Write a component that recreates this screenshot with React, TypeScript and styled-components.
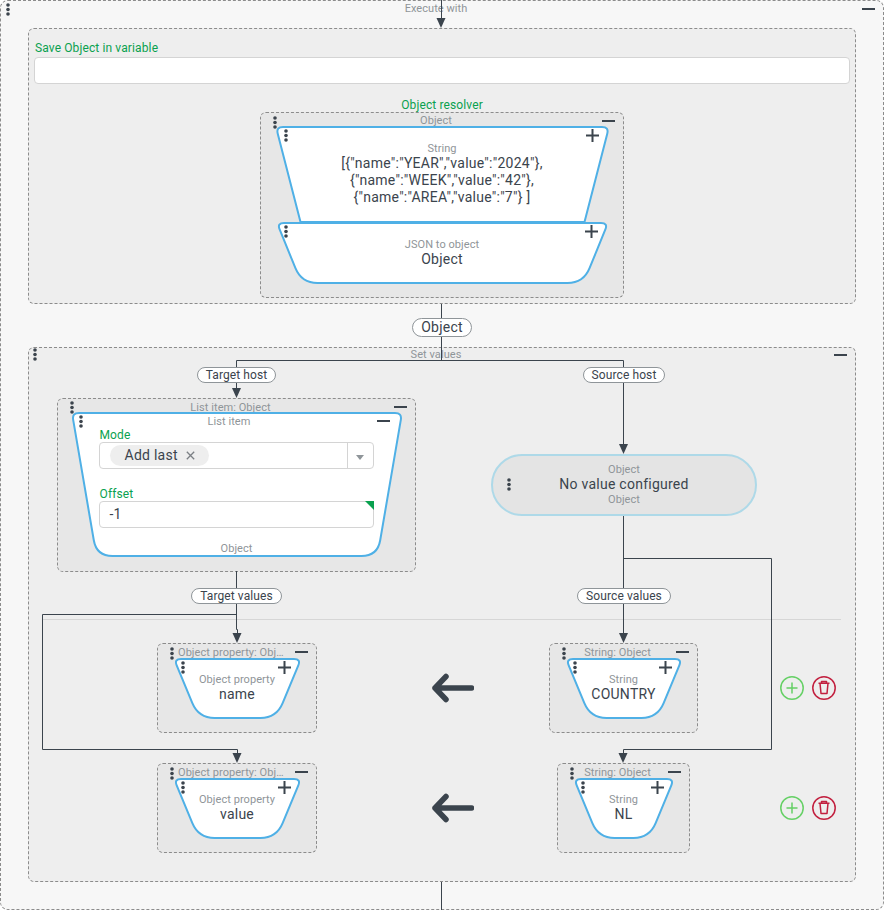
import React from "react";
import styled, { createGlobalStyle } from "styled-components";

const INK = "#3b444d";
const GRAY = "#8f9599";
const GREEN = "#0aa14f";
const BLUE = "#4fb0e6";

const Global = createGlobalStyle`
  html, body { margin: 0; padding: 0; background: #fff; overflow: hidden; }
  * { box-sizing: border-box; }
  body { font-family: Roboto, "Liberation Sans", sans-serif; color: ${INK}; }
`;

const Stage = styled.div`
  position: relative;
  width: 884px;
  height: 910px;
  overflow: hidden;
`;

const EdgeLayer = styled.svg`
  position: absolute;
  left: 0;
  top: 0;
  z-index: 1;
  pointer-events: none;
`;

const Outer = styled.div`
  position: relative;
  width: 884px;
  height: 910px;
  background: #f7f7f7;
  border: 1px dashed #8c8c8c;
  border-radius: 8px;
  display: flex;
  flex-direction: column;
  align-items: center;
`;

const Panel = styled.section<{ $h: number }>`
  position: relative;
  width: 828px;
  height: ${(p) => p.$h}px;
  background: #eeeeee;
  border: 1px dashed #8c8c8c;
  border-radius: 6px;
  flex: none;
`;

const Head = styled.div<{ $top?: number }>`
  display: flex;
  align-items: center;
  height: 14px;
  margin-top: ${(p) => p.$top ?? 0}px;
  padding: 0 8px 0 9px;
  flex: none;
  align-self: stretch;
`;

const HeadLabel = styled.div<{ $nudge?: number }>`
  position: relative;
  top: ${(p) => p.$nudge ?? 2}px;
  flex: 1;
  min-width: 0;
  padding: 0 11px;
  font-size: 11px;
  line-height: 14px;
  letter-spacing: 0.06px;
  color: ${GRAY};
  text-align: center;
  white-space: nowrap;
  overflow: hidden;
  text-overflow: ellipsis;
`;

const DotsHolder = styled.span<{ $x: number; $y: number }>`
  position: absolute;
  left: ${(p) => p.$x}px;
  top: ${(p) => p.$y}px;
  width: 4px;
  height: 13px;
  z-index: 2;
  display: block;
  line-height: 0;
`;

const MinusBar = styled.span<{ $inset?: number }>`
  display: block;
  width: 13px;
  height: 2px;
  margin-right: ${(p) => p.$inset ?? 0}px;
  background: ${INK};
  flex: none;
  position: relative;
  top: 1px;
`;

const PlusHolder = styled.span`
  position: absolute;
  right: 9px;
  top: 3px;
  width: 13px;
  height: 13px;
  line-height: 0;
  z-index: 2;
`;

function Dots({ x, y }: { x: number; y: number }) {
  return (
    <DotsHolder $x={x} $y={y}>
      <svg width="4" height="13" viewBox="0 0 4 13">
        <circle cx="2" cy="2" r="1.8" fill={INK} />
        <circle cx="2" cy="6.5" r="1.8" fill={INK} />
        <circle cx="2" cy="11" r="1.8" fill={INK} />
      </svg>
    </DotsHolder>
  );
}

function Plus() {
  return (
    <PlusHolder>
      <svg width="13" height="13" viewBox="0 0 13 13">
        <path d="M0 6.5H13M6.5 0V13" stroke={INK} strokeWidth="2" fill="none" />
      </svg>
    </PlusHolder>
  );
}

const Box = styled.div<{ $w: number; $h: number }>`
  position: relative;
  width: ${(p) => p.$w}px;
  height: ${(p) => p.$h}px;
  background: #e7e7e7;
  border: 1px dashed #8c8c8c;
  border-radius: 6px;
  display: flex;
  flex-direction: column;
  align-items: center;
  flex: none;
`;

const BoxBody = styled.div<{ $top: number }>`
  margin-top: ${(p) => p.$top}px;
  display: flex;
  flex-direction: column;
  align-items: center;
`;

const TrapShell = styled.div<{ $w: number; $h: number; $over?: boolean }>`
  position: relative;
  width: ${(p) => p.$w}px;
  height: ${(p) => p.$h}px;
  margin-top: ${(p) => (p.$over ? -1 : 0)}px;
  flex: none;
  display: flex;
  flex-direction: column;
  align-items: center;
`;

const TrapShape = styled.svg`
  position: absolute;
  left: 0;
  top: 0;
  overflow: visible;
`;

const TrapContent = styled.div`
  position: relative;
  width: 100%;
  height: 100%;
  display: flex;
  flex-direction: column;
  align-items: center;
`;

const SmallLabel = styled.div<{ $top?: number }>`
  font-size: 11px;
  line-height: 14px;
  letter-spacing: 0.06px;
  color: ${GRAY};
  text-align: center;
  margin-top: ${(p) => p.$top ?? 0}px;
  white-space: nowrap;
`;

const ValueText = styled.div`
  font-size: 14px;
  line-height: 17px;
  letter-spacing: 0.25px;
  margin-top: -1px;
  color: ${INK};
  text-align: center;
  white-space: pre-line;
`;

function roundedPoly(pts: [number, number][], radii: number[]) {
  const n = pts.length;
  let d = "";
  for (let i = 0; i < n; i++) {
    const p = pts[i];
    const a = pts[(i - 1 + n) % n];
    const b = pts[(i + 1) % n];
    const r = radii[i];
    const la = Math.hypot(a[0] - p[0], a[1] - p[1]);
    const lb = Math.hypot(b[0] - p[0], b[1] - p[1]);
    const s = [p[0] + ((a[0] - p[0]) * r) / la, p[1] + ((a[1] - p[1]) * r) / la];
    const e = [p[0] + ((b[0] - p[0]) * r) / lb, p[1] + ((b[1] - p[1]) * r) / lb];
    d += `${i === 0 ? "M" : "L"}${s[0]} ${s[1]} Q${p[0]} ${p[1]} ${e[0]} ${e[1]} `;
  }
  return d + "Z";
}

function Trap({
  w,
  h,
  flat,
  over,
  children,
}: {
  w: number;
  h: number;
  flat?: boolean;
  over?: boolean;
  children: React.ReactNode;
}) {
  const rb = flat ? 0.01 : 16;
  const d = roundedPoly(
    [
      [-1, 1],
      [w + 1, 1],
      [w - 23.5, h - 1],
      [23.5, h - 1],
    ],
    [7, 7, rb, rb]
  );
  return (
    <TrapShell $w={w} $h={h} $over={over}>
      <TrapShape width={w} height={h} viewBox={`0 0 ${w} ${h}`}>
        <path d={d} fill="#fff" stroke={BLUE} strokeWidth="2" />
      </TrapShape>
      <TrapContent>{children}</TrapContent>
    </TrapShell>
  );
}

/* --- Save panel ------------------------------------------------- */

const FieldLabel = styled.label`
  display: block;
  padding-left: 1px;
  font-size: 12px;
  line-height: 14px;
  letter-spacing: 0.12px;
  color: ${GREEN};
`;

const TextField = styled.div`
  position: relative;
  height: 27px;
  background: #fff;
  border: 1px solid #d4d4d4;
  border-radius: 4px;
  font-size: 14px;
  line-height: 25px;
  letter-spacing: 0.25px;
  padding-left: 10px;
  color: ${INK};
`;

const SaveField = styled(TextField)`
  margin-top: 2px;
`;

const Corner = styled.span`
  position: absolute;
  top: -1px;
  right: -1px;
  width: 0;
  height: 0;
  border-top: 9px solid ${GREEN};
  border-left: 9px solid transparent;
`;

const SaveArea = styled.div`
  padding: 12px 5px 0 5px;
`;

const ResolverTitle = styled(FieldLabel)`
  margin-top: 14px;
  padding-left: 0;
  text-align: center;
`;

const ResolverWrap = styled.div`
  display: flex;
  justify-content: center;
`;

/* --- Pills ------------------------------------------------------ */

const EdgePill = styled.div<{ $big?: boolean }>`
  position: relative;
  z-index: 2;
  height: ${(p) => (p.$big ? 19 : 16)}px;
  padding: 0 8px;
  background: #fff;
  border: 1px solid ${GRAY};
  border-radius: 10px;
  font-size: ${(p) => (p.$big ? 14 : 12)}px;
  line-height: ${(p) => (p.$big ? 16 : 15)}px;
  letter-spacing: ${(p) => (p.$big ? 0.25 : 0.1)}px;
  color: ${INK};
  white-space: nowrap;
  flex: none;
`;

const ObjectPillRow = styled.div`
  margin: 14px 0 10px;
  display: flex;
  justify-content: center;
  width: 100%;
`;

/* --- Set values ------------------------------------------------- */

const HostGrid = styled.div`
  display: grid;
  grid-template-columns: 415px 360px;
  grid-template-rows: 16px 174px 16px;
  row-gap: 15px;
  justify-items: center;
  align-items: start;
  margin-top: 6px;
`;

const LastRowPill = styled(EdgePill)`
  margin-top: 1px;
`;

const NoValue = styled.div`
  position: relative;
  width: 266px;
  height: 62px;
  margin-top: 56px;
  background: #e4e4e4;
  border: 2px solid #aed9e8;
  border-radius: 31px;
  display: flex;
  flex-direction: column;
  align-items: center;
  justify-content: center;
`;

const ModeForm = styled.div`
  align-self: stretch;
  margin-top: 1px;
  padding: 0 27px 0 26px;
`;

const OffsetLabel = styled(FieldLabel)`
  margin-top: 18px;
`;

const SelectBox = styled.div`
  display: flex;
  align-items: center;
  height: 27px;
  background: #fff;
  border: 1px solid #d4d4d4;
  border-radius: 4px;
`;

const SelectValue = styled.div`
  flex: 1;
  padding-left: 10px;
  display: flex;
  align-items: center;
`;

const Chip = styled.div`
  display: flex;
  align-items: center;
  height: 21px;
  width: 99px;
  margin-top: -1px;
  padding-left: 15px;
  border-radius: 11px;
  background: #eeeeee;
  font-size: 14px;
  letter-spacing: 0.25px;
  color: ${INK};
  gap: 8px;
`;

const Caret = styled.div`
  width: 26px;
  height: 25px;
  border-left: 1px solid #d4d4d4;
  display: flex;
  align-items: center;
  justify-content: center;
  &::after {
    content: "";
    margin-top: 3px;
    border-top: 5px solid #8f9599;
    border-left: 4.5px solid transparent;
    border-right: 4.5px solid transparent;
  }
`;

const TrapFoot = styled(SmallLabel)`
  margin-top: 14px;
`;

const Divider = styled.div`
  width: 798px;
  height: 1px;
  margin: 16px 0 23px 14px;
  background: #d6d6d6;
`;

const MapRow = styled.div`
  display: flex;
  align-items: center;
  height: 90px;
  margin-bottom: 30px;
`;

const LeftSlot = styled.div`
  margin-left: 128px;
  flex: none;
`;

const BigArrow = styled.svg`
  margin-left: 115px;
  flex: none;
`;

const RightSlot = styled.div`
  width: 299px;
  display: flex;
  justify-content: center;
  flex: none;
`;

const Actions = styled.div`
  display: flex;
  gap: 8px;
  margin-left: 6.5px;
`;

const RoundBtn = styled.button`
  width: 24px;
  height: 24px;
  padding: 0;
  background: transparent;
  border: 0;
  line-height: 0;
`;

function ArrowLeft() {
  return (
    <BigArrow width="42" height="30" viewBox="0 0 42 30">
      <path
        d="M14 3.5L3 15L14 26.5M3 15H39.5"
        fill="none"
        stroke={INK}
        strokeWidth="5.5"
        strokeLinecap="round"
        strokeLinejoin="round"
      />
    </BigArrow>
  );
}

function AddBtn() {
  return (
    <RoundBtn aria-label="add">
      <svg width="24" height="24" viewBox="0 0 24 24">
        <circle cx="12" cy="12" r="11.2" fill="none" stroke="#66d066" strokeWidth="1.5" />
        <path d="M6.5 12H17.5M12 6.5V17.5" stroke="#66d066" strokeWidth="1.5" />
      </svg>
    </RoundBtn>
  );
}

function TrashBtn() {
  return (
    <RoundBtn aria-label="delete">
      <svg width="24" height="24" viewBox="0 0 24 24" fill="none" stroke="#c2203f" strokeWidth="1.5">
        <circle cx="12" cy="12" r="11.2" />
        <path d="M6.5 7.2H17.5M9.5 7V5.6H14.5V7M8 7.2L9 17.5H15L16 7.2" strokeLinejoin="round" />
      </svg>
    </RoundBtn>
  );
}

function ChipClose() {
  return (
    <svg width="9" height="9" viewBox="0 0 9 9">
      <path d="M0.8 0.8L8.2 8.2M8.2 0.8L0.8 8.2" stroke="#7b7f84" strokeWidth="1.3" />
    </svg>
  );
}

function SmallNode({
  boxW,
  trapW,
  title,
  type,
  value,
}: {
  boxW: number;
  trapW: number;
  title: string;
  type: string;
  value: string;
}) {
  return (
    <Box $w={boxW} $h={90}>
      <Dots x={12} y={3} />
      <Head>
        <HeadLabel>{title}</HeadLabel>
        <MinusBar />
      </Head>
      <Trap w={trapW} h={61}>
        <Dots x={6} y={3} />
        <Plus />
        <SmallLabel $top={15}>{type}</SmallLabel>
        <ValueText>{value}</ValueText>
      </Trap>
    </Box>
  );
}

function Arrowhead({ x, y }: { x: number; y: number }) {
  return <path d={`M${x - 4.5} ${y - 10}H${x + 4.5}L${x} ${y}Z`} fill={INK} />;
}

function Edges() {
  const lines = [
    "M441.5 0V20",
    "M441.5 304V360.5",
    "M236.5 360.5H623.5",
    "M236.5 360.5V390",
    "M623.5 360.5V446",
    "M623.5 516V635",
    "M623.5 558.5H771.5V749.5H623.5V755",
    "M236.5 571V629.5H237.5V635",
    "M236.5 614.5H42.5V749.5H237.5V755",
    "M441.5 882V910",
  ];
  return (
    <EdgeLayer width="884" height="910" viewBox="0 0 884 910">
      {lines.map((d) => (
        <path key={d} d={d} fill="none" stroke={INK} strokeWidth="1" />
      ))}
      <Arrowhead x={441} y={28} />
      <Arrowhead x={236.5} y={398} />
      <Arrowhead x={623.5} y={454} />
      <Arrowhead x={237} y={643} />
      <Arrowhead x={623.5} y={643} />
      <Arrowhead x={237} y={763} />
      <Arrowhead x={623} y={763} />
    </EdgeLayer>
  );
}

const JSON_LINES = `[{"name":"YEAR","value":"2024"},
{"name":"WEEK","value":"42"},
{"name":"AREA","value":"7"} ]`;

export default function App() {
  return (
    <Stage>
      <Global />
      <Outer>
        <Dots x={5} y={2} />
        <Head>
          <HeadLabel $nudge={1}>Execute with</HeadLabel>
          <MinusBar />
        </Head>
        <BoxBody $top={13}>
          <Panel $h={276}>
            <SaveArea>
              <FieldLabel>Save Object in variable</FieldLabel>
              <SaveField />
              <ResolverTitle>Object resolver</ResolverTitle>
            </SaveArea>
            <ResolverWrap>
              <Box $w={364} $h={186}>
                <Dots x={12} y={3} />
                <Head>
                  <HeadLabel $nudge={1}>Object</HeadLabel>
                  <MinusBar />
                </Head>
                <BoxBody $top={-1}>
                  <Trap w={331} h={97} flat>
                    <Dots x={7} y={3} />
                    <Plus />
                    <SmallLabel $top={16}>String</SmallLabel>
                    <ValueText>{JSON_LINES}</ValueText>
                  </Trap>
                  <Trap w={329} h={62} over>
                    <Dots x={6} y={3} />
                    <Plus />
                    <SmallLabel $top={16}>JSON to object</SmallLabel>
                    <ValueText>Object</ValueText>
                  </Trap>
                </BoxBody>
              </Box>
            </ResolverWrap>
          </Panel>
        </BoxBody>
        <ObjectPillRow>
          <EdgePill $big>Object</EdgePill>
        </ObjectPillRow>
        <Panel $h={535}>
          <Dots x={4} y={0} />
          <Head $top={-1}>
            <HeadLabel $nudge={1}>Set values</HeadLabel>
            <MinusBar />
          </Head>
          <HostGrid>
            <EdgePill>Target host</EdgePill>
            <EdgePill>Source host</EdgePill>
            <Box $w={359} $h={174}>
              <Dots x={12} y={2} />
              <Head>
                <HeadLabel>List item: Object</HeadLabel>
                <MinusBar />
              </Head>
              <BoxBody $top={-1}>
                <Trap w={328} h={145}>
                  <Dots x={6} y={3} />
                  <Head $top={1}>
                    <HeadLabel>List item</HeadLabel>
                    <MinusBar $inset={3} />
                  </Head>
                  <ModeForm>
                    <FieldLabel>Mode</FieldLabel>
                    <SelectBox>
                      <SelectValue>
                        <Chip>
                          Add last
                          <ChipClose />
                        </Chip>
                      </SelectValue>
                      <Caret />
                    </SelectBox>
                    <OffsetLabel>Offset</OffsetLabel>
                    <TextField>
                      -1
                      <Corner />
                    </TextField>
                  </ModeForm>
                  <TrapFoot>Object</TrapFoot>
                </Trap>
              </BoxBody>
            </Box>
            <NoValue>
              <Dots x={14} y={22} />
              <SmallLabel>Object</SmallLabel>
              <ValueText>No value configured</ValueText>
              <SmallLabel>Object</SmallLabel>
            </NoValue>
            <LastRowPill>Target values</LastRowPill>
            <LastRowPill>Source values</LastRowPill>
          </HostGrid>
          <Divider />
          <MapRow>
            <LeftSlot>
              <SmallNode boxW={160} trapW={125} title="Object property: Object" type="Object property" value="name" />
            </LeftSlot>
            <ArrowLeft />
            <RightSlot>
              <SmallNode boxW={149} trapW={114} title="String: Object" type="String" value="COUNTRY" />
            </RightSlot>
            <Actions>
              <AddBtn />
              <TrashBtn />
            </Actions>
          </MapRow>
          <MapRow>
            <LeftSlot>
              <SmallNode boxW={160} trapW={125} title="Object property: Object" type="Object property" value="value" />
            </LeftSlot>
            <ArrowLeft />
            <RightSlot>
              <SmallNode boxW={133} trapW={98} title="String: Object" type="String" value="NL" />
            </RightSlot>
            <Actions>
              <AddBtn />
              <TrashBtn />
            </Actions>
          </MapRow>
        </Panel>
      </Outer>
      <Edges />
    </Stage>
  );
}
